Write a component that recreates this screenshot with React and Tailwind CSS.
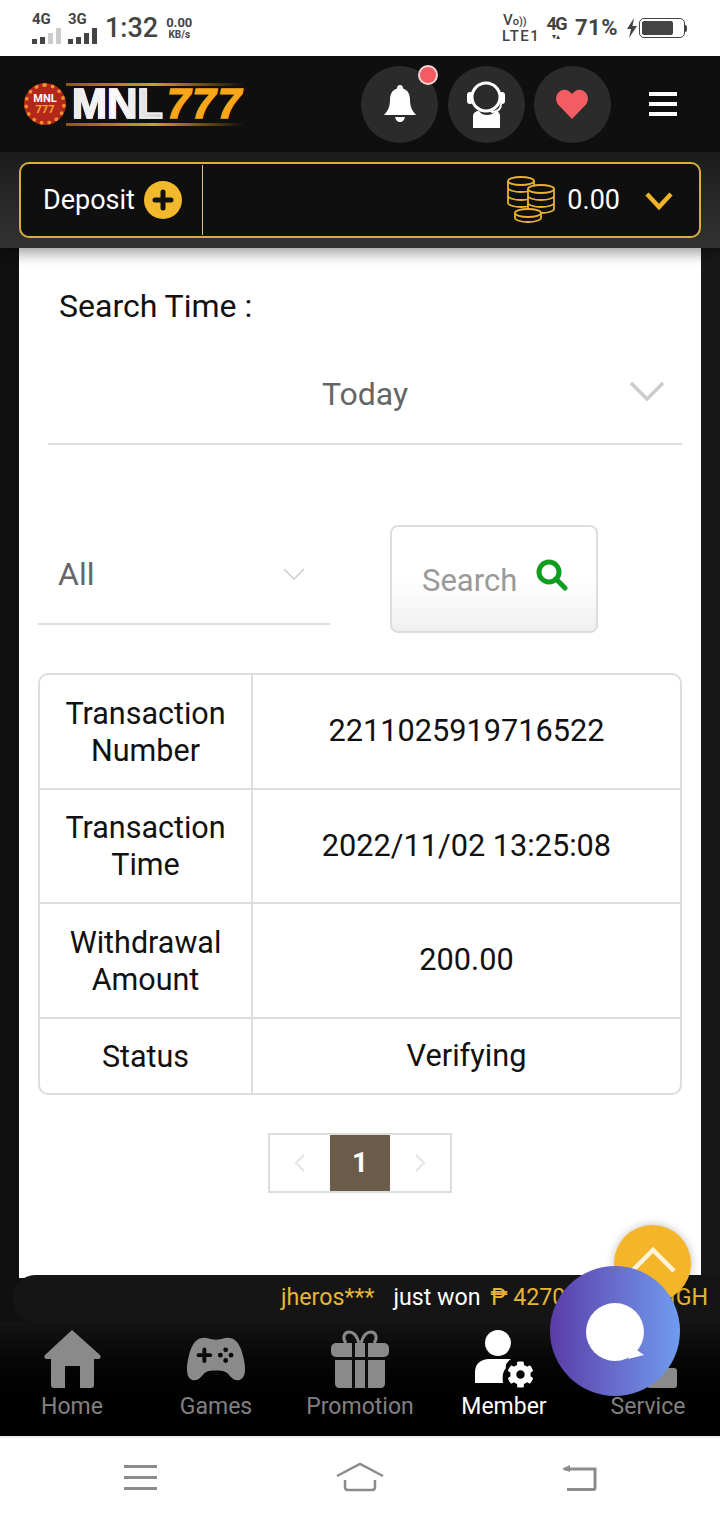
import React from "react";
import { IoGameController } from "react-icons/io5";
import { FaCog } from "react-icons/fa";

const rows = [
  { label: ["Transaction", "Number"], value: "2211025919716522", height: "h-[113px]" },
  { label: ["Transaction", "Time"], value: "2022/11/02 13:25:08", height: "h-[114px]" },
  { label: ["Withdrawal", "Amount"], value: "200.00", height: "h-[115px]" },
  { label: ["Status"], value: "Verifying", height: "h-[76px]" },
];

const SignalBars = ({ label, dim }) => (
  <div className="flex flex-col items-start leading-none">
    <span className="text-[15px] font-bold leading-[14px] text-[#444]">{label}</span>
    <div className="mt-[2px] flex items-end gap-[3px]">
      <span className="h-[5px] w-[5px] bg-[#444]" />
      <span className="h-[7px] w-[5px] bg-[#444]" />
      <span className={`h-[11px] w-[5px] ${dim ? "bg-[#ccc]" : "bg-[#444]"}`} />
      <span className={`h-[16px] w-[5px] ${dim ? "bg-[#ccc]" : "bg-[#444]"}`} />
    </div>
  </div>
);

const StatusBar = () => (
  <div className="flex h-[56px] items-center justify-between bg-white pl-[32px] pr-[33px] text-[#444]">
    <div className="flex items-center">
      <SignalBars label="4G" dim />
      <div className="ml-[7px]">
        <SignalBars label="3G" />
      </div>
      <span className="ml-[8px] text-[27px] font-medium leading-none">1:32</span>
      <div className="ml-[8px] flex flex-col items-center text-[13px] font-bold leading-[13px]">
        <span>0.00</span>
        <span className="text-[10px] leading-[12px]">KB/s</span>
      </div>
    </div>
    <div className="flex items-center">
      <div className="flex flex-col text-[15px] font-medium leading-[14px]">
        <span className="pl-[1px]">V<span className="text-[11px]">o))</span></span>
        <span className="tracking-[1.5px]">LTE1</span>
      </div>
      <div className="ml-[6px] flex flex-col items-center">
        <span className="text-[18px] font-bold leading-[16px] tracking-[-1.5px]">4G</span>
        <span className="text-[8px] leading-[9px]">▾▴</span>
      </div>
      <span className="ml-[9px] text-[22px] font-bold leading-none tracking-[0.5px]">71%</span>
      <svg viewBox="0 0 12 20" className="ml-[8px] h-[20px] w-[12px]" fill="#444">
        <path d="M8 0 1 11h4l-2 9 8-12H6.500z" />
      </svg>
      <div className="ml-[1px] flex h-[20px] w-[46px] items-center rounded-[5px] border border-[#444] px-[2px]">
        <div className="h-[14px] w-[31px] rounded-[2px] bg-[#444]" />
      </div>
      <div className="h-[7px] w-[2px] rounded-r bg-[#444]" />
    </div>
  </div>
);

const Logo = () => (
  <div className="flex items-center">
    <div className="flex h-[42px] w-[42px] flex-col items-center justify-center rounded-full border-[4px] border-dotted border-[#f0902a] bg-[#b3261a] text-[11px] font-bold leading-[11px]">
      <span className="text-white">MNL</span>
      <span className="text-[#f7a928]">777</span>
    </div>
    <div className="flex flex-col">
      <div className="h-[3px] w-[178px] bg-gradient-to-r from-[#8a5a16] via-[#d89a2a] to-transparent" />
      <div
        className="flex h-[37px] items-center pl-[6px] text-[42px] font-black leading-none"
        style={{ fontFamily: '"Liberation Sans", sans-serif' }}
      >
        <span className="bg-gradient-to-r from-[#e8e8e8] via-white to-[#cfcfcf] bg-clip-text text-transparent [-webkit-text-stroke:1.5px_#eeeeee]">MNL</span>
        <span className="ml-[4px] italic tracking-[2px] text-[#f9a61a] [-webkit-text-stroke:1.5px_#f9a61a]">777</span>
      </div>
      <div className="h-[3px] w-[178px] bg-gradient-to-r from-[#8a5a16] via-[#d89a2a] to-transparent" />
    </div>
  </div>
);

const CircleButton = ({ children }) => (
  <div className="flex h-[77px] w-[77px] items-center justify-center rounded-full bg-[#2b2b2b]">{children}</div>
);

const Header = () => (
  <div className="flex h-[96px] items-center bg-[#0f0f0f] pl-[24px] pr-[43px]">
    <Logo />
    <div className="ml-auto flex items-center gap-[9.5px]">
      <div className="relative">
        <CircleButton>
          <svg viewBox="0 0 32 38" className="h-[38px] w-[32px]" fill="white">
            <path d="M16 0c2 0 3 1.500 3 3.500 5 1.500 7 6 7 11 0 7 2 11 6 15.500H0c4-4.500 6-8.500 6-15.500 0-5 2-9.500 7-11C13 1.500 14 0 16 0z" />
            <path d="M11 32h10c-1 4-3 5-5 5s-4-1-5-5z" />
          </svg>
        </CircleButton>
        <span className="absolute right-[0px] top-[-1px] h-[20px] w-[20px] rounded-full border-2 border-[#f5d5d5] bg-[#f25c62]" />
      </div>
      <CircleButton>
        <svg viewBox="0 0 40 48" className="h-[48px] w-[40px]">
          <circle cx="20" cy="17" r="14" fill="none" stroke="white" strokeWidth="3" />
          <rect x="1" y="12" width="6" height="12" rx="3" fill="white" />
          <rect x="33" y="12" width="6" height="12" rx="3" fill="white" />
          <path d="M35 24c0 6-5 8-10 8" fill="none" stroke="white" strokeWidth="2" />
          <path d="M7 48V36c0-3 3-5 6-5 2 3 5 4 8 4s6-1 8-4c3 0 5 2 5 5v12z" fill="white" />
        </svg>
      </CircleButton>
      <CircleButton>
        <svg viewBox="0 0 32 30" className="mr-[2px] h-[30px] w-[32px]" fill="#f25c62">
          <path d="M16 30 2.500 16C-1 12-.5 6 3 3c4-3.500 9-3 13 2 4-5 9-5.500 13-2 3.500 3 4 9 .5 13z" />
        </svg>
      </CircleButton>
    </div>
    <div className="ml-[38px] flex w-[28px] flex-col gap-[6px]">
      <span className="h-[4px] bg-white" />
      <span className="h-[4px] bg-white" />
      <span className="h-[4px] bg-white" />
    </div>
  </div>
);

const Coins = () => (
  <svg viewBox="0 0 48 48" className="h-[48px] w-[48px]" fill="#0f0f0f" stroke="#e8b22f" strokeWidth="1.800">
    <path d="M1 5v22c0 2 6 4 13 4s13-2 13-4V5" />
    <ellipse cx="14" cy="5" rx="13" ry="4" />
    <path d="M1 12c0 2 6 4 13 4s13-2 13-4M1 20c0 2 6 4 13 4s13-2 13-4" fill="none" />
    <path d="M21 13v20c0 2 6 4 13 4s13-2 13-4V13" />
    <ellipse cx="34" cy="13" rx="13" ry="4" />
    <path d="M21 20c0 2 6 4 13 4s13-2 13-4M21 27c0 2 6 4 13 4s13-2 13-4" fill="none" />
    <path d="M8 37v5c0 2 6 4 13 4s13-2 13-4v-5" />
    <ellipse cx="21" cy="37" rx="13" ry="4" />
  </svg>
);

const BalanceBar = () => (
  <div className="relative z-10 h-[96px] bg-gradient-to-b from-[#1c1c1c] to-[#333] px-[19px] pt-[10px] shadow-[0_6px_12px_rgba(0,0,0,0.35)]">
    <div className="flex h-[76px] items-center rounded-[10px] border-2 border-[#d9ae3c] bg-[#0f0f0f] pr-[26px]">
      <div className="flex h-[70px] w-[182px] items-center border-r border-[#d9c48a] pl-[22px]">
        <span className="text-[27px] leading-none text-white">Deposit</span>
        <div className="ml-[9px] flex h-[38px] w-[38px] items-center justify-center rounded-full bg-[#f3b92c]">
          <svg viewBox="0 0 24 24" className="h-[24px] w-[24px]" fill="none" stroke="#111" strokeWidth="5" strokeLinecap="round">
            <path d="M12 4v16M4 12h16" />
          </svg>
        </div>
      </div>
      <div className="ml-auto flex items-center">
        <Coins />
        <span className="ml-[12px] text-[27px] leading-none text-white">0.00</span>
        <svg viewBox="0 0 28 20" className="ml-[25px] mt-[2px] h-[20px] w-[28px]" fill="none" stroke="#eeb42c" strokeWidth="4.500">
          <path d="M2 3l12 13L26 3" />
        </svg>
      </div>
    </div>
  </div>
);

const Filters = () => (
  <>
    <p className="ml-[40px] pt-[40px] text-[32px] leading-[36px] text-[#111]">Search Time :</p>
    <div className="ml-[29px] mr-[19px] mt-[34px] grid h-[87px] grid-cols-[1fr_auto_1fr] items-start border-b-2 border-[#ddd] pr-[17px] pl-[17px] pt-[16px]">
      <span className="col-start-2 text-[32px] leading-[40px] text-[#666]">Today</span>
      <svg viewBox="0 0 36 22" className="mt-[6px] h-[22px] w-[36px] justify-self-end" fill="none" stroke="#ccc" strokeWidth="3.500">
        <path d="M2 3l16 16L34 3" />
      </svg>
    </div>
    <div className="mt-[82px] flex items-start px-[19px]">
      <div className="flex h-[98px] w-[292px] items-start justify-between border-b-2 border-[#ddd] pl-[20px] pr-[25px] pt-[27px]">
        <span className="text-[32px] leading-[40px] text-[#666]">All</span>
        <svg viewBox="0 0 22 14" className="mt-[13px] h-[14px] w-[22px]" fill="none" stroke="#ccc" strokeWidth="1.500">
          <path d="M1 2l10 10L21 2" />
        </svg>
      </div>
      <div className="ml-[60px] mt-[-2px] flex h-[108px] w-[208px] items-center rounded-[8px] border-2 border-[#ddd] bg-gradient-to-b from-white via-white to-[#f0f0f0] pl-[30px]">
        <span className="mt-[2px] text-[31px] leading-none text-[#999]">Search</span>
        <svg viewBox="0 0 32 32" className="mb-[8px] ml-[19px] h-[32px] w-[32px]" fill="none" stroke="#0f9d1f" strokeWidth="5">
          <circle cx="13" cy="13" r="10" />
          <path d="M20 20l9 9" strokeLinecap="round" />
        </svg>
      </div>
    </div>
  </>
);

const ResultTable = () => (
  <div className="mx-[19px] mt-[40px] overflow-hidden rounded-[10px] border-2 border-[#ddd]">
    {rows.map((row, index) => (
      <div key={row.value} className={`flex ${row.height} ${index > 0 ? "border-t-2 border-[#ddd]" : ""}`}>
        <div className="flex w-[213px] flex-col items-center justify-center border-r-2 border-[#ddd] text-[30.5px] leading-[37px] text-[#111]">
          {row.label.map((line) => (
            <span key={line}>{line}</span>
          ))}
        </div>
        <div className="flex flex-1 items-center justify-center text-[30.7px] leading-none text-[#111]">{row.value}</div>
      </div>
    ))}
  </div>
);

const Pagination = () => (
  <div className="mx-auto mt-[38px] flex h-[60px] w-[184px] items-center border-2 border-[#ddd]">
    <div className="flex h-full flex-1 items-center justify-center">
      <svg viewBox="0 0 12 20" className="h-[20px] w-[12px]" fill="none" stroke="#e4e4e4" strokeWidth="2">
        <path d="M10 2 2 10l8 8" />
      </svg>
    </div>
    <div className="flex h-[56px] w-[60px] items-center justify-center bg-[#6b5c4a] text-[28px] font-bold leading-none text-white">1</div>
    <div className="flex h-full flex-1 items-center justify-center">
      <svg viewBox="0 0 12 20" className="h-[20px] w-[12px]" fill="none" stroke="#e4e4e4" strokeWidth="2">
        <path d="M2 2l8 8-8 8" />
      </svg>
    </div>
  </div>
);

const Ticker = () => (
  <div className="relative z-[1] ml-[13px] mt-[-47px] flex h-[47px] items-center overflow-hidden whitespace-nowrap rounded-l-[22px] bg-[#151515] pb-[1px] pl-[268px] pr-[12px] text-[23.2px] leading-none">
    <span className="text-[#e6b534]">jheros***</span>
    <span className="ml-[19px] text-white">just won</span>
    <span className="ml-[10px] text-[#e6b534]">₱ 4270.00</span>
    <span className="ml-auto text-[#e6b534]">HIGH</span>
  </div>
);

const HomeIcon = () => (
  <svg viewBox="0 0 58 58" className="h-[58px] w-[58px]" fill="#8a8a8a">
    <path d="M29 0 57 25c1.500 2 0 4-2 4h-4v26c0 2-1 3-3 3H37V36H22v22H11c-2 0-3-1-3-3V29H4c-2 0-3.500-2-2-4z" />
  </svg>
);

const GiftIcon = () => (
  <svg viewBox="0 0 58 58" className="h-[58px] w-[58px]">
    <path d="M28 13C26 6 23 2 18 2c-5 0-7 6-3 11M30 13c2-7 5-11 10-11 5 0 7 6 3 11" fill="none" stroke="#8a8a8a" strokeWidth="3" />
    <rect x="0" y="13" width="58" height="14" rx="5" fill="#8a8a8a" />
    <path d="M4 30h50v24c0 2-2 4-4 4H8c-2 0-4-2-4-4z" fill="#8a8a8a" />
    <rect x="0" y="27" width="58" height="3" fill="#0d0d0d" />
    <rect x="21" y="13" width="3" height="45" fill="#0d0d0d" />
    <rect x="34" y="13" width="3" height="45" fill="#0d0d0d" />
  </svg>
);

const MemberIcon = () => (
  <div className="relative h-[58px] w-[58px]">
    <svg viewBox="0 0 58 58" className="h-[58px] w-[58px]" fill="white">
      <circle cx="23" cy="13" r="13" />
      <path d="M0 53V42c0-8 6-13 14-13h22c-4 3-6 6-5 9-3 3-4 8-3 15z" />
    </svg>
    <FaCog className="absolute bottom-0 right-[-1px] h-[27px] w-[27px] text-white" />
  </div>
);

const tabs = [
  { label: "Home", icon: <HomeIcon /> },
  { label: "Games", icon: <IoGameController className="h-[62px] w-[62px] text-[#8a8a8a]" /> },
  { label: "Promotion", icon: <GiftIcon /> },
  { label: "Member", icon: <MemberIcon />, active: true },
  {
    label: "Service",
    icon: (
      <div className="flex h-[58px] w-[58px] items-end justify-end">
        <div className="h-[20px] w-[30px] rounded-[3px] bg-[#8a8a8a]" />
      </div>
    ),
  },
];

const TabBar = () => (
  <div className="grid h-[114px] grid-cols-5 bg-gradient-to-b from-[#141414] to-black pt-[8px]">
    {tabs.map((tab) => (
      <div key={tab.label} className="flex flex-col items-center">
        <div className="flex h-[58px] items-center justify-center">{tab.icon}</div>
        <span className={`mt-[5px] text-[23px] leading-[28px] ${tab.active ? "text-white" : "text-[#808080]"}`}>{tab.label}</span>
      </div>
    ))}
  </div>
);

const NavBar = () => (
  <div className="grid h-[84px] grid-cols-3 items-center border-t-2 border-[#eee] bg-white px-[31px] pb-[4px]">
    <div className="flex flex-col items-center gap-[8px]">
      <span className="h-[3px] w-[33px] bg-[#8c8c8c]" />
      <span className="h-[3px] w-[33px] bg-[#8c8c8c]" />
      <span className="h-[3px] w-[33px] bg-[#8c8c8c]" />
    </div>
    <div className="flex justify-center">
      <svg viewBox="0 0 50 30" className="h-[30px] w-[50px]" fill="none" stroke="#8c8c8c" strokeWidth="2.500">
        <path d="M2 14 25 2l23 12M10 18v7c0 2 1 3 3 3h24c2 0 3-1 3-3v-7" />
      </svg>
    </div>
    <div className="flex justify-center">
      <svg viewBox="0 0 36 28" className="h-[28px] w-[36px]" fill="none" stroke="#8c8c8c" strokeWidth="3">
        <path d="M3 6h31v19c0 1-.5 1.500-1.500 1.500H6" />
        <path d="M1 6l8-4v7z" fill="#8c8c8c" stroke="none" />
      </svg>
    </div>
  </div>
);

const FloatingButtons = () => (
  <>
    <div className="absolute left-[614px] top-[1225px] z-[2] flex h-[77px] w-[77px] items-start justify-center rounded-full bg-[#f5b529] pt-[22px] shadow-[0_0_10px_rgba(0,0,0,0.25)]">
      <svg viewBox="0 0 46 26" className="h-[26px] w-[46px]" fill="none" stroke="#fdf3da" strokeWidth="4.500">
        <path d="M2 24 23 3l21 21" />
      </svg>
    </div>
    <div className="absolute left-[550px] top-[1266px] z-[2] flex h-[130px] w-[130px] items-center justify-center rounded-full bg-gradient-to-r from-[#5a3ca6] to-[#6f9cf0]">
      <svg viewBox="0 0 62 62" className="h-[62px] w-[62px]" fill="white">
        <circle cx="31" cy="32" r="29" />
        <path d="M50 48l10 7-16 4z" />
      </svg>
    </div>
  </>
);

const App = () => {
  return (
    <div
      className="relative flex h-[1520px] w-[720px] flex-col overflow-hidden bg-white"
      style={{ fontFamily: 'Roboto, "Liberation Sans", sans-serif' }}
    >
      <StatusBar />
      <Header />
      <BalanceBar />
      <div className="min-h-0 flex-1 bg-gradient-to-r from-[#101010] to-[#181818] px-[19px] pb-[44px]">
        <div className="h-full bg-white">
          <Filters />
          <ResultTable />
          <Pagination />
        </div>
      </div>
      <Ticker />
      <TabBar />
      <NavBar />
      <FloatingButtons />
    </div>
  );
};

export default App;
